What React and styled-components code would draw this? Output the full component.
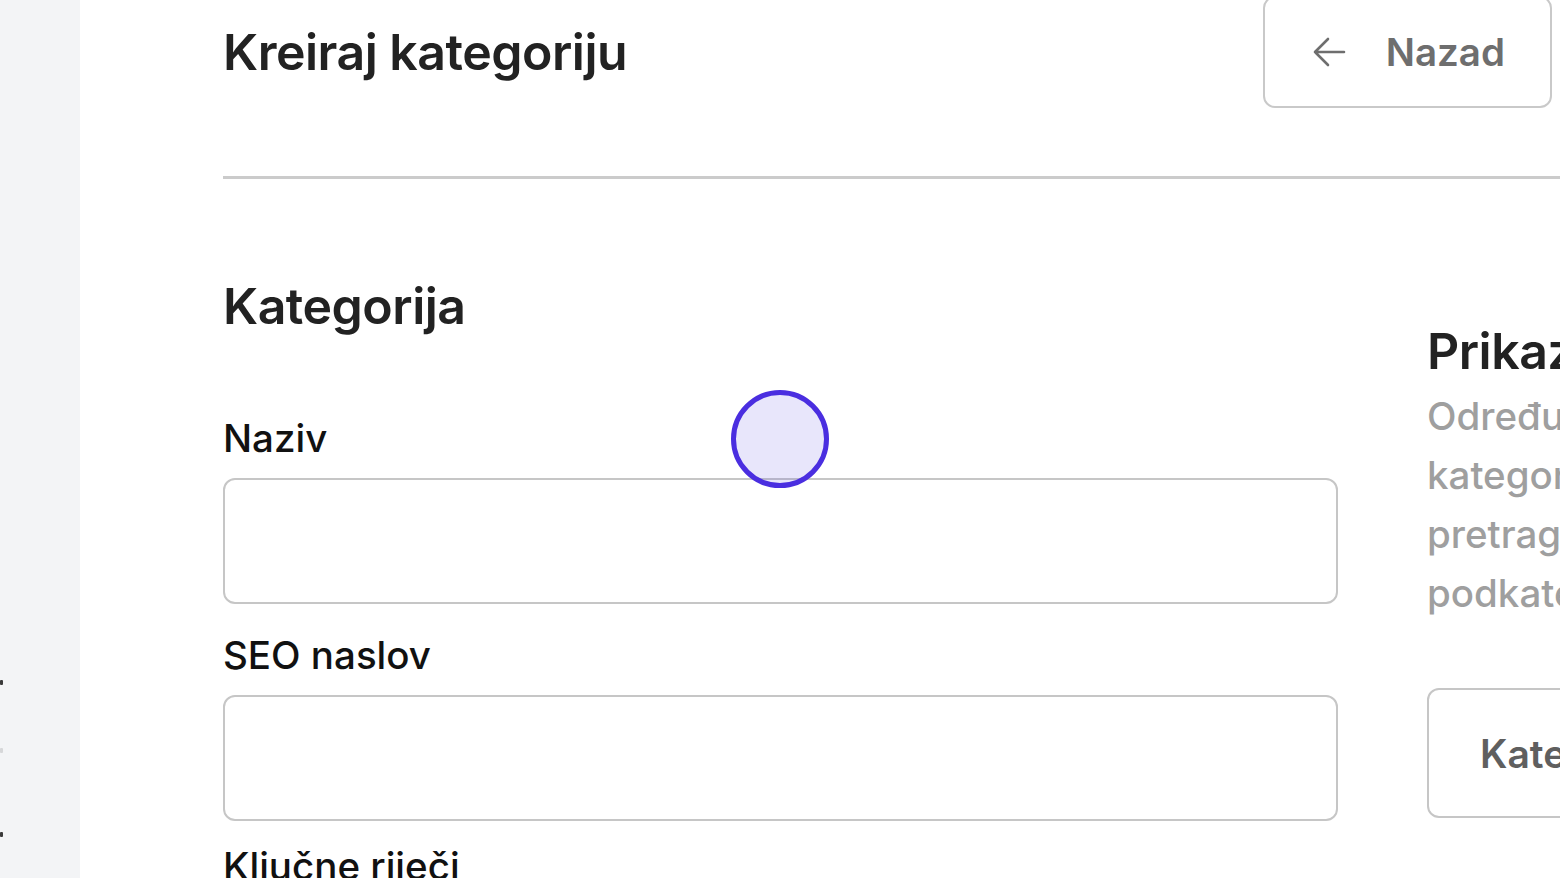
import React from 'react';
import styled, { createGlobalStyle } from 'styled-components';

const GlobalStyle = createGlobalStyle`
	html, body {
		margin: 0;
		padding: 0;
		background: #ffffff;
		overflow: hidden;
	}
	body {
		font-family: Inter, 'Noto Sans', 'Liberation Sans', sans-serif;
		color: #1f1f1f;
	}
`;

const Shell = styled.div`
	display: flex;
	width: 100vw;
	height: 100vh;
	overflow: hidden;
`;

const Sidebar = styled.aside`
	width: 80px;
	flex-shrink: 0;
	background: #f3f4f6;
	display: flex;
	flex-direction: column;
	padding-top: 680px;
	box-sizing: border-box;
`;

const SideMark = styled.span`
	display: block;
	width: 3px;
	height: 5px;
	margin-bottom: ${(p) => p.after || 0}px;
	background: ${(p) => (p.faint ? '#d6d7d9' : '#3a3a3a')};
	border-radius: 1px;
`;

const Main = styled.main`
	flex: 1;
	min-width: 0;
	padding-left: 143px;
	overflow: hidden;
	position: relative;
`;

const Header = styled.header`
	display: flex;
	align-items: center;
	justify-content: space-between;
	width: 1329px;
	height: 112px;
	margin-top: -4px;
`;

const Title = styled.h1`
	margin: 0;
	font-size: 50px;
	font-weight: 600;
	letter-spacing: -0.5px;
	color: #222222;
`;

const BackButton = styled.button`
	display: flex;
	align-items: center;
	gap: 40px;
	height: 112px;
	padding: 0 45px 0 47px;
	box-sizing: border-box;
	background: #ffffff;
	border: 2.5px solid #c9c9c9;
	border-radius: 12px;
	font-family: inherit;
	font-size: 38.5px;
	font-weight: 600;
	color: #6e6e6e;
	cursor: pointer;
`;

const Divider = styled.hr`
	margin: 68px 0 0 0;
	width: 1500px;
	height: 0;
	border: none;
	border-top: 3px solid #cbcbcb;
`;

const Body = styled.div`
	display: grid;
	grid-template-columns: 1115px 460px;
	column-gap: 89px;
	margin-top: 97px;
`;

const FormColumn = styled.section`
	display: flex;
	flex-direction: column;
`;

const SectionTitle = styled.h2`
	margin: 0;
	font-size: 50px;
	line-height: 60px;
	font-weight: 600;
	letter-spacing: -0.5px;
	color: #222222;
	white-space: nowrap;
`;

const Label = styled.label`
	display: block;
	font-size: 38.5px;
	line-height: 47px;
	font-weight: 500;
	color: #111111;
	margin-top: ${(p) => p.top}px;
	margin-bottom: 16px;
`;

const Input = styled.input`
	display: block;
	width: 100%;
	height: 126px;
	box-sizing: border-box;
	border: 2.5px solid #c6c6c6;
	border-radius: 12px;
	padding: 0 28px;
	font-family: inherit;
	font-size: 38.5px;
	outline: none;
`;

const SideColumn = styled.section`
	padding-top: 45px;
	display: flex;
	flex-direction: column;
`;

const Description = styled.p`
	margin: 6px 0 0 0;
	font-size: 38.5px;
	line-height: 59px;
	font-weight: 500;
	color: #9f9f9f;
	white-space: nowrap;
`;

const OptionBox = styled.div`
	margin-top: 65px;
	height: 130px;
	box-sizing: border-box;
	border: 2.5px solid #c6c6c6;
	border-radius: 12px;
	display: flex;
	align-items: center;
	padding-left: 51px;
	font-size: 39px;
	font-weight: 600;
	color: #5f5f5f;
	white-space: nowrap;
`;

const Cursor = styled.div`
	position: fixed;
	left: 731px;
	top: 390px;
	width: 98px;
	height: 98px;
	box-sizing: border-box;
	border-radius: 50%;
	border: 5px solid #4a2ee0;
	background: rgba(92, 76, 224, 0.14);
	pointer-events: none;
`;

function ArrowLeft() {
	return (
		<svg width="34" height="30" viewBox="0 0 34 30" fill="none">
			<path
				d="M32 15H3M16 2L3 15l13 13"
				stroke="#6e6e6e"
				strokeWidth="2.6"
				strokeLinecap="round"
				strokeLinejoin="round"
			/>
		</svg>
	);
}

function App() {
	return (
		<>
			<GlobalStyle />
			<Shell>
				<Sidebar>
					<SideMark after={63} />
					<SideMark faint after={79} />
					<SideMark />
				</Sidebar>
				<Main>
					<Header>
						<Title>Kreiraj kategoriju</Title>
						<BackButton>
							<ArrowLeft />
							Nazad
						</BackButton>
					</Header>
					<Divider />
					<Body>
						<FormColumn>
							<SectionTitle>Kategorija</SectionTitle>
							<Label top={79}>Naziv</Label>
							<Input type="text" />
							<Label top={28}>SEO naslov</Label>
							<Input type="text" />
							<Label top={22}>Ključne riječi</Label>
							<Input type="text" />
						</FormColumn>
						<SideColumn>
							<SectionTitle>Prikaz kategorije</SectionTitle>
							<Description>
								Određuje da li će se
								<br />
								kategorija prikazivati u
								<br />
								pretragama i kao
								<br />
								podkategorija.
							</Description>
							<OptionBox>Kategorija je vidljiva</OptionBox>
						</SideColumn>
					</Body>
					<Cursor />
				</Main>
			</Shell>
		</>
	);
}

export default App;
